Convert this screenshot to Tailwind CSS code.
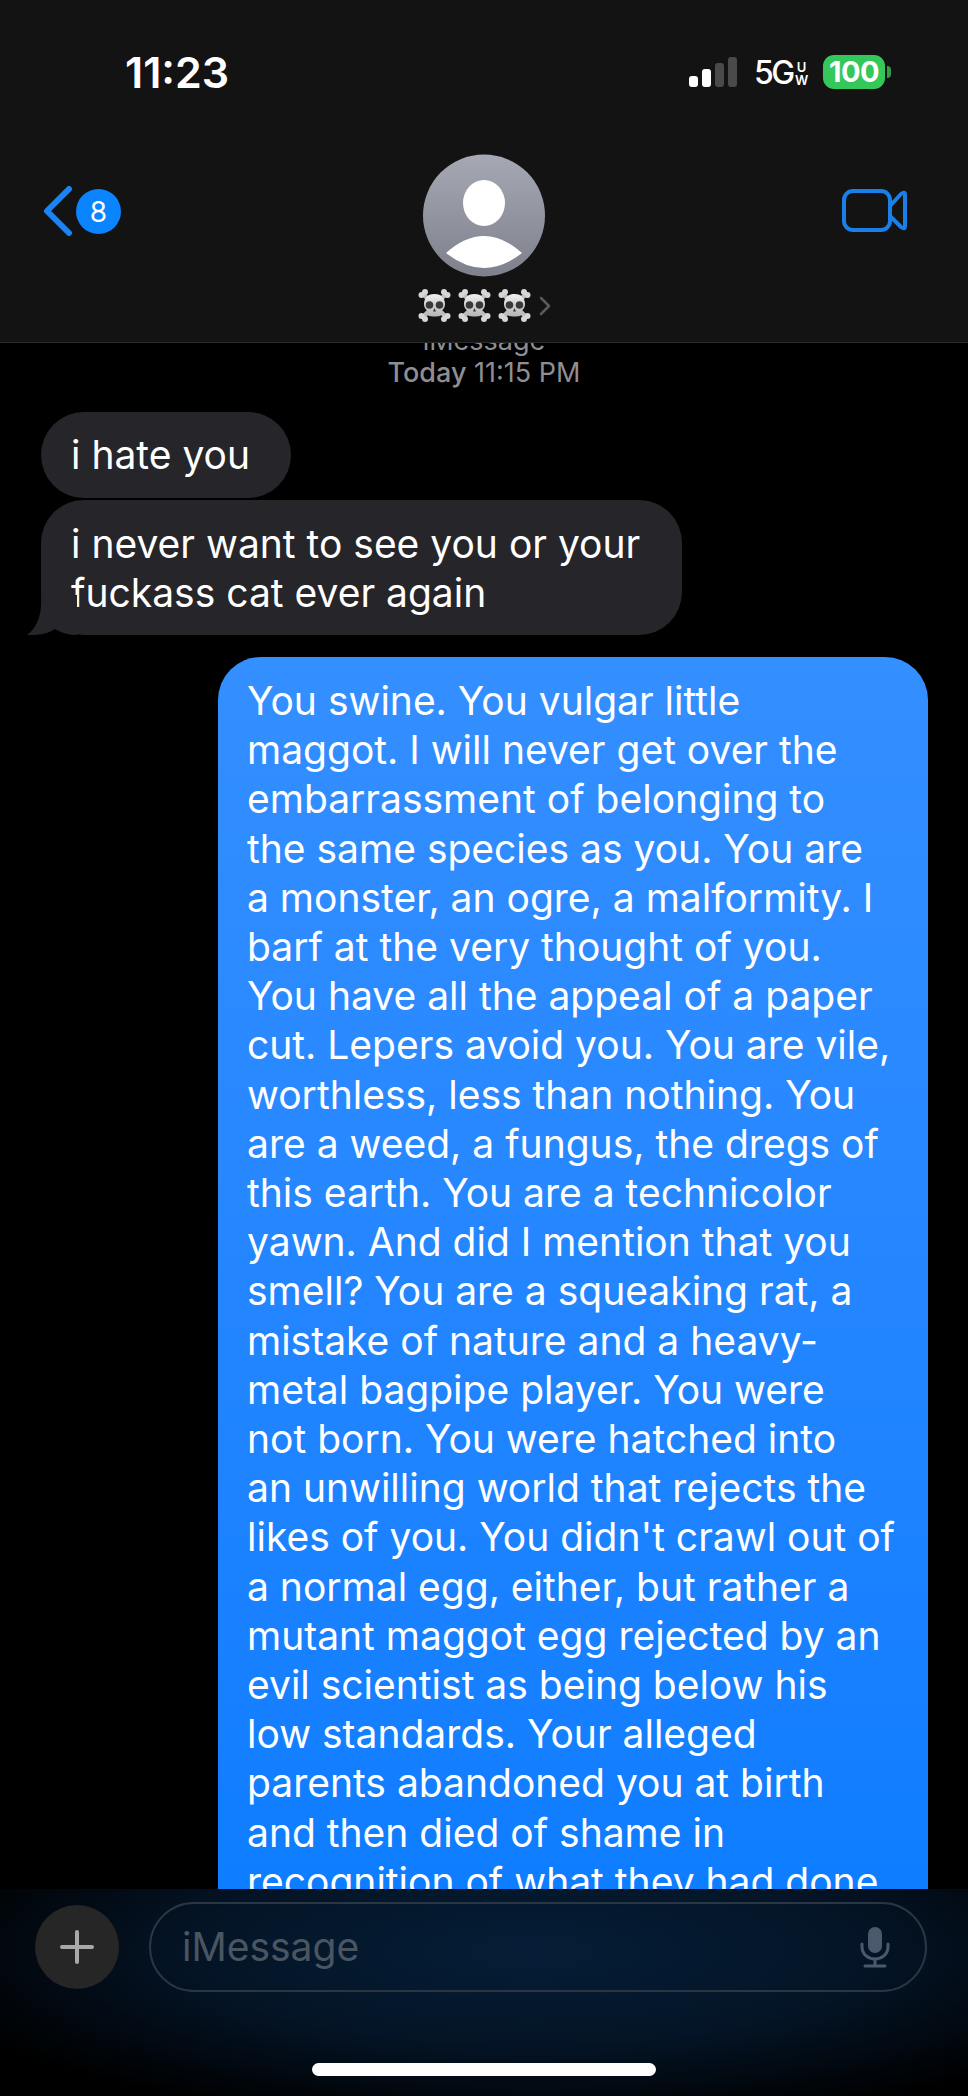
<!DOCTYPE html>
<html lang="en">

<head>
  <meta charset="UTF-8" />
  <meta name="viewport" content="width=device-width, initial-scale=1.0"/>
  <title>Messages</title>
  <script src="https://cdn.jsdelivr.net/npm/@tailwindcss/browser@4"></script>
</head>

<body class="bg-black font-['Inter',sans-serif] text-white">

  <div class="w-[968px] h-[2096px] flex flex-col overflow-hidden">

    <!-- Header -->
    <header class="h-[343px] shrink-0 bg-[#131313] border-b border-[#2a2a2a]">
      <!-- Status bar -->
      <div class="h-[100px] pl-[125px] pr-[77px] pt-[55px] flex justify-between items-start">
        <span class="text-[43px] leading-[34px] font-semibold">11:23</span>
        <div class="flex items-start">
          <div class="flex items-end gap-[4px] h-[30px] mt-[2px]">
            <span class="w-[9px] h-[11px] rounded-[3px] bg-white"></span>
            <span class="w-[9px] h-[18px] rounded-[3px] bg-white"></span>
            <span class="w-[9px] h-[24px] rounded-[3px] bg-[#4a4a4a]"></span>
            <span class="w-[9px] h-[30px] rounded-[3px] bg-[#4a4a4a]"></span>
          </div>
          <span class="ml-[17px] w-[39px] text-[32px] leading-[36px] font-medium tracking-[-2.5px]">5G</span>
          <div class="ml-[3px] mt-[6px] w-[11px] flex flex-col items-center text-[13px] leading-[13px] font-semibold">
            <span>U</span>
            <span>W</span>
          </div>
          <div class="ml-[16px] w-[62px] h-[34px] rounded-[11px] bg-[#34c759] flex items-center justify-center text-[29px] font-bold tracking-[-0.5px]">100</div>
          <span class="ml-[2px] mt-[11px] w-[4px] h-[12px] rounded-r-[4px] bg-[#2f9e4c]"></span>
        </div>
      </div>

      <!-- Nav row -->
      <div class="grid grid-cols-[1fr_auto_1fr] px-[43px] mt-[54px]">
        <div class="flex items-start pt-[32px]">
          <svg width="30" height="50" viewBox="0 0 30 50" fill="none" stroke="#1a84f5" stroke-width="6" stroke-linecap="round" stroke-linejoin="round">
            <path d="M26 3 L4 25 L26 47" />
          </svg>
          <span class="ml-[3px] mt-[3px] w-[45px] h-[45px] rounded-full bg-[#0a84ff] flex items-center justify-center text-[28px] font-normal">8</span>
        </div>

        <div class="flex flex-col items-center">
          <svg width="122" height="123" viewBox="0 0 122 123">
            <defs>
              <linearGradient id="avatarBg" x1="0" y1="0" x2="0" y2="1">
                <stop offset="0" stop-color="#a6a9b3" />
                <stop offset="1" stop-color="#7e818b" />
              </linearGradient>
              <linearGradient id="skullFace" x1="0" y1="0" x2="0" y2="1">
                <stop offset="0" stop-color="#f0f0f0" />
                <stop offset="1" stop-color="#b4b4b4" />
              </linearGradient>
            </defs>
            <circle cx="61" cy="61.5" r="61" fill="url(#avatarBg)" />
            <ellipse cx="61" cy="49" rx="21" ry="23" fill="#fff" />
            <path d="M23 99 Q61 65 99 99 Q61 129 23 99 Z" fill="#fff" />
          </svg>
          <div class="flex items-center gap-[7px] mt-[12px]">
            <svg width="33" height="33" viewBox="0 0 33 33"><use href="#skull" /></svg>
            <svg width="33" height="33" viewBox="0 0 33 33"><use href="#skull" /></svg>
            <svg width="33" height="33" viewBox="0 0 33 33"><use href="#skull" /></svg>
            <svg class="ml-[1px]" width="12" height="20" viewBox="0 0 12 20" fill="none" stroke="#5a5a5e" stroke-width="2.5" stroke-linecap="round" stroke-linejoin="round">
              <path d="M2 2 L10 10 L2 18" />
            </svg>
          </div>
        </div>

        <div class="flex justify-end pt-[35px] pr-[18px]">
          <svg width="65" height="43" viewBox="0 0 65 43" fill="none" stroke="#1a7fe8" stroke-width="4" stroke-linejoin="round">
            <rect x="2" y="2" width="46" height="39" rx="9" />
            <path d="M48 17 L59 5 Q63 2 63 6 L63 37 Q63 41 59 38 L48 27" stroke-linecap="round" />
          </svg>
        </div>
      </div>
    </header>

    <!-- Messages -->
    <main class="flex-1 min-h-0 overflow-hidden">
      <div class="-mt-[18px] text-center text-[27px] leading-[32px] text-[#8e8e93]">
        <p>iMessage</p>
        <p><span class="font-medium">Today</span> 11:15 PM</p>
      </div>

      <div class="mt-[23px] pl-[41px]">
        <div class="w-[250px] h-[86px] pl-[30px] rounded-[43px] bg-[#26252a] flex items-center text-[39px]">i hate you</div>
        <div class="relative mt-[2px] w-[641px] h-[135px] pl-[30px] pt-[19px] rounded-[43px] bg-[#26252a] text-[39px] leading-[49px]">
          i never want to see you or your<br>fuckass cat ever again
          <svg class="absolute left-[-14px] bottom-0" width="50" height="40" viewBox="0 0 50 40">
            <path d="M14 0 Q 16 28 0 40 Q 18 41 28 34 Q 38 40 50 40 L 50 0 Z" fill="#26252a" />
          </svg>
        </div>
      </div>

      <div class="ml-[218px] mt-[22px] w-[710px] pl-[29px] pt-[19px] pb-[40px] rounded-t-[43px] bg-gradient-to-b from-[#348fff] to-[#0a7cff] text-[39px] leading-[49.2px] whitespace-nowrap">
        You swine. You vulgar little<br>
        maggot. I will never get over the<br>
        embarrassment of belonging to<br>
        the same species as you. You are<br>
        a monster, an ogre, a malformity. I<br>
        barf at the very thought of you.<br>
        You have all the appeal of a paper<br>
        cut. Lepers avoid you. You are vile,<br>
        worthless, less than nothing. You<br>
        are a weed, a fungus, the dregs of<br>
        this earth. You are a technicolor<br>
        yawn. And did I mention that you<br>
        smell? You are a squeaking rat, a<br>
        mistake of nature and a heavy-<br>
        metal bagpipe player. You were<br>
        not born. You were hatched into<br>
        an unwilling world that rejects the<br>
        likes of you. You didn't crawl out of<br>
        a normal egg, either, but rather a<br>
        mutant maggot egg rejected by an<br>
        evil scientist as being below his<br>
        low standards. Your alleged<br>
        parents abandoned you at birth<br>
        and then died of shame in<br>
        recognition of what they had done
      </div>
    </main>

    <!-- Input bar -->
    <footer class="h-[207px] shrink-0 bg-[radial-gradient(ellipse_at_55%_30%,#051e37_0%,#041426_45%,#000000_85%)]">
      <div class="flex items-center pl-[35px] pr-[41px] pt-[13px]">
        <div class="w-[84px] h-[84px] shrink-0 rounded-full bg-[#262626] flex items-center justify-center">
          <svg width="34" height="34" viewBox="0 0 34 34" stroke="#a8a8a8" stroke-width="4" stroke-linecap="round">
            <path d="M17 2 V32 M2 17 H32" />
          </svg>
        </div>
        <div class="ml-[30px] flex-1 h-[90px] rounded-[45px] border-2 border-[#2b3644] pl-[31px] pr-[35px] flex items-center justify-between">
          <span class="text-[39px] text-[#4a5562]">iMessage</span>
          <svg width="30" height="42" viewBox="0 0 30 42" fill="none" stroke="#4a5a6c" stroke-width="3" stroke-linecap="round">
            <rect x="8" y="1" width="14" height="26" rx="7" fill="#4a5a6c" stroke="none" />
            <path d="M2 18 V21 C2 28 8 33 15 33 C22 33 28 28 28 21 V18" />
            <path d="M15 33 V39 M5 40 H25" />
          </svg>
        </div>
      </div>
      <div class="mt-[71px] mx-auto w-[344px] h-[13px] rounded-full bg-white"></div>
    </footer>
  </div>

  <!-- Skull emoji drawn once, used by the contact name -->
  <svg class="hidden" width="0" height="0">
    <symbol id="skull" viewBox="0 0 33 33">
      <g stroke="#bdbdbd" stroke-width="4.5" stroke-linecap="round">
        <path d="M5 5 L28 28 M28 5 L5 28" />
      </g>
      <g fill="#d6d6d6">
        <circle cx="3.5" cy="6" r="3" /><circle cx="7" cy="3" r="3" />
        <circle cx="29.5" cy="6" r="3" /><circle cx="26" cy="3" r="3" />
        <circle cx="3.5" cy="27" r="3" /><circle cx="7" cy="30" r="3" />
        <circle cx="29.5" cy="27" r="3" /><circle cx="26" cy="30" r="3" />
      </g>
      <path d="M16.5 5 C24 5 27 10 27 15 C27 19 24.5 21 23 22 V26 C23 28 10 28 10 26 V22 C8.5 21 6 19 6 15 C6 10 9 5 16.5 5 Z" fill="url(#skullFace)" />
      <circle cx="11.5" cy="16" r="3.8" fill="#3a3a3a" />
      <circle cx="21.5" cy="16" r="3.8" fill="#3a3a3a" />
      <path d="M16.5 19 L18 22.5 H15 Z" fill="#3a3a3a" />
    </symbol>
  </svg>

</body>

</html>
